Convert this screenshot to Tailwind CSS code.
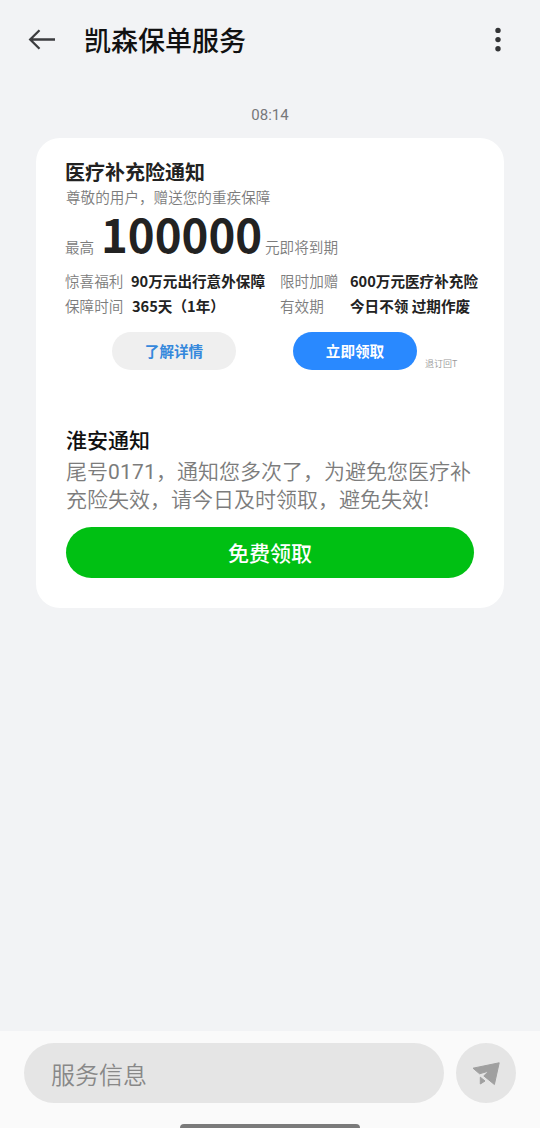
<!DOCTYPE html>
<html lang="zh-CN">
<head>
<meta charset="utf-8">
<title>凯森保单服务</title>
<script src="https://cdn.jsdelivr.net/npm/@tailwindcss/browser@4"></script>
</head>
<body class="bg-[#f2f3f5]">
<div class="flex h-[1128px] w-[540px] flex-col overflow-hidden bg-[#f2f3f5] font-['Noto_Sans_CJK_SC',sans-serif] whitespace-nowrap">
  <header class="flex h-20 items-center pl-7 pr-[37px]">
    <svg class="h-7 w-7" viewBox="0 0 28 28" fill="none" stroke="#3c3d3f" stroke-width="2.3"><path d="M27 13.5H2.5M11.5 4.3L2.2 13.5L11.5 22.7"/></svg>
    <h1 class="ml-7 grow text-[27px] leading-10 font-medium text-[#111]">凯森保单服务</h1>
    <svg class="h-7 w-[10px]" viewBox="0 0 10 28" fill="#333436"><circle cx="5" cy="4.4" r="2.7"/><circle cx="5" cy="13.6" r="2.7"/><circle cx="5" cy="22.7" r="2.7"/></svg>
  </header>
  <main class="grow px-9">
    <time class="mt-6 block h-[34px] text-center font-[Roboto] text-[15px] leading-[22px] text-[#77787a]">08:14</time>
    <section class="h-[470px] rounded-[24px] bg-white px-[30px] pt-[21px]">
      <div class="h-[263px] text-[14.6px] text-[#7c7c7c]">
        <h2 class="-ml-px h-[27px] text-[20px] leading-[26px] font-bold text-[#222]">医疗补充险通知</h2>
        <p class="h-[22px] leading-[22px] font-[350]">尊敬的用户，赠送您的重疾保障</p>
        <p class="-ml-px flex h-[60px] items-baseline font-[350] leading-[50px]"><span class="w-[36px]">最高</span><b class="w-[164px] text-[45.5px] font-bold leading-[51px] text-[#222]">100000</b><span>元即将到期</span></p>
        <dl class="-ml-px grid grid-cols-[66px_149px_70px_auto] font-[350] leading-[25px]">
          <dt>惊喜福利</dt><dd class="font-bold text-[#222]">90万元出行意外保障</dd>
          <dt>限时加赠</dt><dd class="font-bold text-[#222]">600万元医疗补充险</dd>
          <dt>保障时间</dt><dd class="pl-px font-bold text-[#222]">365天（1年）</dd>
          <dt>有效期</dt><dd class="font-bold text-[#222]">今日不领 过期作废</dd>
        </dl>
        <div class="mt-[14px] flex pl-[46px] font-bold">
          <button class="h-[38px] w-[124px] rounded-full bg-[#efefef] text-[#3588dc]">了解详情</button>
          <button class="ml-[57px] h-[38px] w-[124px] rounded-full bg-[#2989ff] text-white">立即领取</button>
          <span class="ml-2 mt-[25px] text-[9px] leading-[14px] font-[350] text-[#999]">退订回T</span>
        </div>
      </div>
      <h2 class="h-[34px] text-[21px] leading-[34px] font-medium text-[#111]">淮安通知</h2>
      <p class="text-[21px] leading-[28px] font-[350] text-[#7c7c7c]">尾号<span class="font-[Roboto] leading-none font-normal tracking-[0.2px]">0171</span>，通知您多次了，为避免您医疗补<br>充险失效，请今日及时领取，避免失效!</p>
      <button class="mt-[15px] h-[51px] w-[408px] rounded-full bg-[#00c013] text-[21px] font-medium text-white">免费领取</button>
    </section>
  </main>
  <footer class="flex h-[97px] flex-col justify-between bg-[#fafafa] pt-3">
    <div class="flex gap-3 px-6">
      <div class="h-[60px] w-[420px] rounded-full bg-[#e5e5e5] pl-[27px] text-[24px] leading-[61px] font-[350] text-[#888]">服务信息</div>
      <div class="flex h-[60px] w-[60px] items-center justify-center rounded-full bg-[#e5e5e5]">
        <svg class="h-[30px] w-[30px]" viewBox="0 0 30 30" fill="#a0a0a0" stroke="#a0a0a0" stroke-width="1" stroke-linejoin="round"><path d="M2 10.2L28.2 4.8L23.4 26.5L12.8 17.9L18 13L8.6 15.8Z"/><path d="M9.3 19.2L14 23L9.3 26Z"/></svg>
      </div>
    </div>
    <div class="mx-auto h-1 w-[180px] rounded-t-sm bg-[#7b7b7b]"></div>
  </footer>
</div>
</body>
</html>
